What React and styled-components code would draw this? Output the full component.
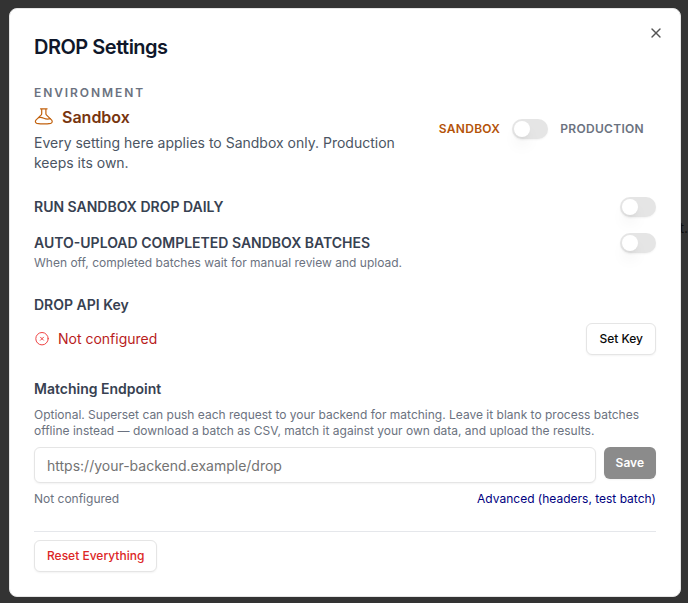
import React, { useState } from 'react'
import styled, { createGlobalStyle } from 'styled-components'
import { X } from 'lucide-react'

const GlobalStyle = createGlobalStyle`
  * {
    box-sizing: border-box;
  }
  body {
    margin: 0;
    background: #333;
    color: #0f172a;
    font-family: Inter, 'Liberation Sans', sans-serif;
    font-size: 14px;
    line-height: 20px;
  }
  h2, h3, p {
    margin: 0;
  }
  button, input {
    font-family: inherit;
  }
`

const Backdrop = styled.div`
  position: relative;
  min-height: 100vh;
  padding: 8px 7px 6px 9px;
  overflow: hidden;
`

const PageText = styled.span`
  position: absolute;
  top: 218px;
  right: 0;
  color: #0c0c0c;
`

const Dialog = styled.section`
  position: relative;
  display: flex;
  flex-direction: column;
  gap: 24px;
  padding: 24px;
  background: #fff;
  border: 1px solid #e5e5e5;
  border-radius: 8px;
`

const Title = styled.h2`
  font-size: 20px;
  font-weight: 600;
  line-height: 28px;
  letter-spacing: -0.025em;
`

const CloseButton = styled.button`
  position: absolute;
  top: 16px;
  right: 16px;
  display: flex;
  padding: 0;
  background: none;
  border: none;
  color: #555;
  cursor: pointer;
`

const Row = styled.div`
  display: flex;
  align-items: ${props => props.$align || 'center'};
  justify-content: space-between;
  gap: ${props => props.$gap || 16}px;
`

const Stack = styled.div`
  display: flex;
  flex-direction: column;
  gap: ${props => props.$gap}px;
`

const Eyebrow = styled.h3`
  color: #6b7280;
  font-size: 12px;
  font-weight: 600;
  line-height: 16px;
  letter-spacing: 0.16em;
  text-transform: uppercase;
`

const EnvironmentName = styled.div`
  display: flex;
  align-items: center;
  gap: 8px;
  color: #78350f;
  font-size: 16px;
  font-weight: 600;
  line-height: 24px;
`

const Description = styled.p`
  color: #4b5563;
`

const Hint = styled.p`
  color: #6b7280;
  font-size: 12px;
  line-height: 16px;
`

const EnvironmentSwitch = styled.div`
  display: flex;
  flex-shrink: 0;
  align-items: center;
  gap: 12px;
  padding: 0 12px;
`

const EnvironmentOption = styled.span`
  color: ${props => (props.$active ? '#b45309' : '#6b7280')};
  font-size: 12px;
  font-weight: 600;
  line-height: 16px;
  letter-spacing: 0.025em;
  text-transform: uppercase;
`

const Switch = styled.input.attrs({ type: 'checkbox', role: 'switch' })`
  appearance: none;
  flex-shrink: 0;
  width: 36px;
  height: 20px;
  margin: 0;
  padding: 2px;
  background: #e5e5e5;
  border-radius: 10px;
  box-shadow: 0 1px 2px rgba(0, 0, 0, .05);
  cursor: pointer;

  &::before {
    content: '';
    display: block;
    width: 16px;
    height: 16px;
    background: #fff;
    border-radius: 50%;
    box-shadow: 0 10px 15px -3px rgba(0, 0, 0, .1), 0 4px 6px -4px rgba(0, 0, 0, .1);
  }

  &:checked {
    background: #171717;
  }

  &:checked::before {
    margin-left: 16px;
  }
`

const Label = styled.label`
  color: #374151;
  font-weight: 600;
  text-transform: ${props => (props.$upper ? 'uppercase' : 'none')};
`

const SectionTitle = styled.h3`
  color: #374151;
  font-size: 14px;
  font-weight: 600;
`

const KeyStatus = styled.span`
  display: flex;
  align-items: center;
  gap: 8px;
  color: #b91c1c;
`

const Button = styled.button`
  flex-shrink: 0;
  height: 32px;
  padding: 0 12px;
  background: #fff;
  border: 1px solid #e5e5e5;
  border-radius: 6px;
  box-shadow: 0 1px 2px rgba(0, 0, 0, .05);
  color: ${props => (props.$danger ? '#dc2626' : '#0a0a0a')};
  font-size: 12px;
  font-weight: 500;
  line-height: 16px;
  cursor: pointer;
`

const SaveButton = styled(Button)`
  background: #8b8b8b;
  border: none;
  color: #fff;
  font-weight: 600;
`

const TextInput = styled.input`
  flex: 1;
  min-width: 0;
  height: 36px;
  padding: 4px 12px;
  background: #fff;
  border: 1px solid #e5e5e5;
  border-radius: 6px;
  box-shadow: 0 1px 2px rgba(0, 0, 0, .05);
  font-size: 14px;

  &::placeholder {
    color: #737373;
  }
`

const AdvancedLink = styled.a`
  color: #000080;
  font-size: 12px;
  line-height: 16px;
  text-decoration: none;
`

const Footer = styled.footer`
  padding-top: 8px;
  border-top: 1px solid #e5e7eb;
`

const FlaskIcon = () => (
  <svg
    width="20"
    height="20"
    viewBox="0 0 20 20"
    fill="none"
    stroke="#c2620e"
    strokeWidth="1.2"
    strokeLinecap="round"
    strokeLinejoin="round"
    aria-hidden="true"
  >
    <path d="M6.500 1.800h6.600M7.700 1.800v4.600c0 .7-.3 1.300-.7 1.700L1.900 13.200c-1 1.200-.5 2.800 1 3.100 4.600.8 9.200.8 13.800 0 1.500-.3 2-1.900 1-3.100L12.600 8.100c-.4-.4-.7-1-.7-1.700V1.800" />
    <path d="M4.600 10.600c1.800-.3 3.600-.1 5.200.6 2 .9 4.300 1.100 6.500.5" />
  </svg>
)

const CrossCircleIcon = () => (
  <svg
    width="16"
    height="16"
    viewBox="0 0 16 16"
    fill="none"
    stroke="#ef4444"
    strokeLinecap="round"
    aria-hidden="true"
  >
    <circle cx="8" cy="7.700" r="6.200" />
    <path d="M6.500 6.200l3 3M9.500 6.200l-3 3" />
  </svg>
)

const App = () => {
  const [production, setProduction] = useState(false)
  const [endpoint, setEndpoint] = useState('')
  const environment = production ? 'Production' : 'Sandbox'
  const other = production ? 'Sandbox' : 'Production'

  return (
    <Backdrop>
      <GlobalStyle />
      <PageText aria-hidden="true">t.</PageText>
      <Dialog role="dialog" aria-labelledby="title">
        <Title id="title">DROP Settings</Title>
        <CloseButton aria-label="Close">
          <X size={16} strokeWidth={2} />
        </CloseButton>

        <Row>
          <Stack $gap={4}>
            <Eyebrow>Environment</Eyebrow>
            <EnvironmentName>
              <FlaskIcon />
              {environment}
            </EnvironmentName>
            <Description>
              Every setting here applies to {environment} only. {other} keeps its own.
            </Description>
          </Stack>
          <EnvironmentSwitch>
            <EnvironmentOption $active={!production}>Sandbox</EnvironmentOption>
            <Switch
              aria-label="Use production"
              checked={production}
              onChange={e => setProduction(e.target.checked)}
            />
            <EnvironmentOption $active={production}>Production</EnvironmentOption>
          </EnvironmentSwitch>
        </Row>

        <Stack $gap={16}>
          <Row>
            <Label $upper htmlFor="daily">Run {environment} DROP daily</Label>
            <Switch id="daily" />
          </Row>
          <Row $align="flex-start">
            <Stack $gap={2}>
              <Label $upper htmlFor="upload">
                Auto-upload completed {environment} batches
              </Label>
              <Hint>When off, completed batches wait for manual review and upload.</Hint>
            </Stack>
            <Switch id="upload" />
          </Row>
        </Stack>

        <Stack $gap={8}>
          <SectionTitle>DROP API Key</SectionTitle>
          <Row>
            <KeyStatus>
              <CrossCircleIcon />
              Not configured
            </KeyStatus>
            <Button>Set Key</Button>
          </Row>
        </Stack>

        <Stack $gap={8}>
          <Label htmlFor="endpoint">Matching Endpoint</Label>
          <Hint>
            Optional. Superset can push each request to your backend for matching. Leave
            it blank to process batches offline instead — download a batch as CSV, match
            it against your own data, and upload the results.
          </Hint>
          <Row $align="flex-start" $gap={8}>
            <TextInput
              id="endpoint"
              type="url"
              placeholder="https://your-backend.example/drop"
              value={endpoint}
              onChange={e => setEndpoint(e.target.value)}
            />
            <SaveButton disabled={!endpoint}>Save</SaveButton>
          </Row>
          <Row>
            <Hint>Not configured</Hint>
            <AdvancedLink href="#advanced">Advanced (headers, test batch)</AdvancedLink>
          </Row>
        </Stack>

        <Footer>
          <Button $danger>Reset Everything</Button>
        </Footer>
      </Dialog>
    </Backdrop>
  )
}

export default App
